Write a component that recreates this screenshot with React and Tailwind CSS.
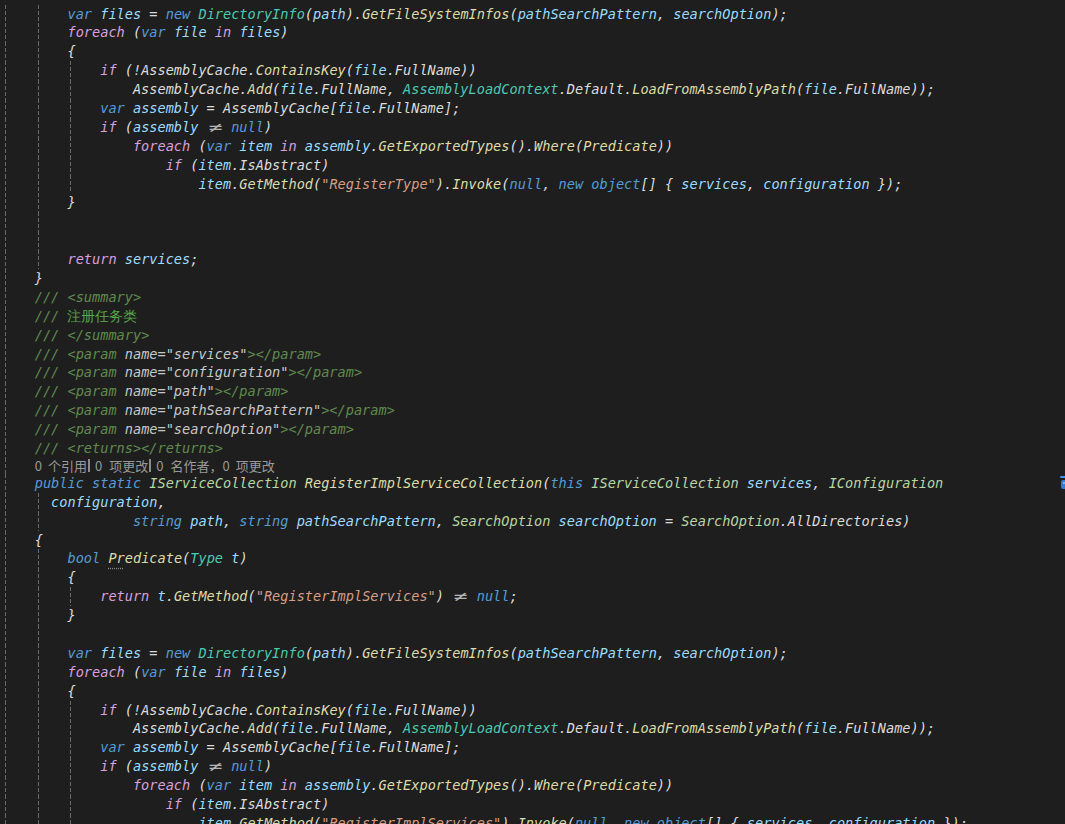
import React from 'react';

const C = {
  k: 'text-[#569cd6]',
  c: 'text-[#d8a0df]',
  t: 'text-[#4ec9b0]',
  i: 'text-[#b8d7a3]',
  f: 'text-[#dcdcaa]',
  v: 'text-[#9cdcfe]',
  s: 'text-[#d69d85]',
  g: 'text-[#57a64a] not-italic',
  d: 'text-[#608b4e]',
  a: 'text-[#c8c8c8]',
  p: 'text-[#dcdcdc]',
};

function Tokens({ text }) {
  const segs = text.split('|');
  return segs.map((seg, i) => {
    if (seg.length >= 2 && seg[1] === ':') {
      const key = seg[0];
      const body = seg.slice(2);
      if (key === 'n') {
        return (
          <span key={i} className="inline-block w-[2ch] text-center not-italic text-[#b4b4b4] scale-x-[1.7]">
            {body}
          </span>
        );
      }
      if (key === 'u') {
        return (
          <span
            key={i}
            className="text-[#dcdcaa] underline decoration-dotted decoration-[#8a8a8a] underline-offset-[4px]"
          >
            {body}
          </span>
        );
      }
      if (C[key]) {
        return (
          <span key={i} className={C[key]}>
            {body}
          </span>
        );
      }
    }
    return (
      <span key={i} className="text-[#dcdcdc]">
        {seg}
      </span>
    );
  });
}

function Guide() {
  return (
    <div className="ml-[3px] w-px h-full bg-[linear-gradient(to_bottom,#6a6a6a_0,#6a6a6a_4px,transparent_4px,transparent_6px)] bg-[length:1px_6px]" />
  );
}

function Line({ ind, g, text, extra }) {
  const cells = [];
  let rem = ind;
  let idx = 0;
  while (rem > 0) {
    const w = Math.min(4, rem);
    cells.push({ w, guide: idx < g });
    rem -= w;
    idx++;
  }
  return (
    <div className="flex h-[18.9px] leading-[18.9px] whitespace-pre">
      {cells.map((c, i) => (
        <div key={i} className={c.w === 4 ? 'w-[4ch] shrink-0 flex' : 'w-[2ch] shrink-0 flex'}>
          {c.guide && <Guide />}
        </div>
      ))}
      {text && (
        <span>
          <Tokens text={text} />
        </span>
      )}
      {extra}
    </div>
  );
}

function Bar() {
  return <span className="ml-[1px] w-[2px] h-[13px] bg-[#8c8c8c]" />;
}

function CodeLens() {
  return (
    <div className="flex h-[16px] whitespace-pre">
      <div className="w-[4ch] shrink-0 flex">
        <Guide />
      </div>
      <div className="flex items-center not-italic text-[13px] leading-[16px] text-[#999999] font-['Noto_Sans_CJK_SC','Noto_Sans',sans-serif]">
        <span>0</span>
        <span className="ml-[6px]">个引用</span>
        <Bar />
        <span className="ml-[5px]">0</span>
        <span className="ml-[7px]">项更改</span>
        <Bar />
        <span className="ml-[5px]">0</span>
        <span className="ml-[7px]">名作者，</span>
        <span>0</span>
        <span className="ml-[6px]">项更改</span>
      </div>
    </div>
  );
}

function HintIcon() {
  return (
    <div className="ml-auto -mr-[9px] shrink-0 flex items-center h-full">
      <svg width="16" height="16" viewBox="0 0 16 16">
        <rect x="2" y="1" width="12" height="2" rx="1" fill="#3794ff" />
        <rect x="3" y="5" width="10" height="9" rx="2" fill="#2b7fd9" />
        <rect x="5" y="7" width="6" height="2" fill="#6fb6ff" />
      </svg>
    </div>
  );
}

const loop = (str) => [
  { ind: 8, g: 2, text: 'k:var| |v:files| = |k:new| |t:DirectoryInfo|(|v:path|).|f:GetFileSystemInfos|(|v:pathSearchPattern|, |v:searchOption|);' },
  { ind: 8, g: 2, text: 'c:foreach| (|k:var| |v:file| |c:in| |v:files|)' },
  { ind: 8, g: 2, text: '{' },
  { ind: 12, g: 3, text: 'c:if| (!AssemblyCache.|f:ContainsKey|(|v:file|.FullName))' },
  { ind: 16, g: 3, text: 'AssemblyCache.|f:Add|(|v:file|.FullName, |t:AssemblyLoadContext|.Default.|f:LoadFromAssemblyPath|(|v:file|.FullName));' },
  { ind: 12, g: 3, text: 'k:var| |v:assembly| = AssemblyCache[|v:file|.FullName];' },
  { ind: 12, g: 3, text: 'c:if| (|v:assembly| |n:≠| |k:null|)' },
  { ind: 16, g: 3, text: 'c:foreach| (|k:var| |v:item| |c:in| |v:assembly|.|f:GetExportedTypes|().|f:Where|(|f:Predicate|))' },
  { ind: 20, g: 3, text: 'c:if| (|v:item|.IsAbstract)' },
  { ind: 24, g: 3, text: 'v:item|.|f:GetMethod|(|s:"' + str + '"|).|f:Invoke|(|k:null|, |k:new| |k:object|[] { |v:services|, |v:configuration| });' },
];

const param = (n) => ({ ind: 4, g: 1, text: 'd:/// <param |a:name="' + n + '"|d:></param>' });

const top = [
  ...loop('RegisterType'),
  { ind: 8, g: 2, text: '}' },
  { ind: 8, g: 2, text: '' },
  { ind: 8, g: 2, text: '' },
  { ind: 8, g: 2, text: 'c:return| |v:services|;' },
  { ind: 4, g: 1, text: '}' },
  { ind: 4, g: 1, text: 'd:/// <summary>' },
  { ind: 4, g: 1, text: 'd:/// |g:注册任务类' },
  { ind: 4, g: 1, text: 'd:/// </summary>' },
  param('services'),
  param('configuration'),
  param('path'),
  param('pathSearchPattern'),
  param('searchOption'),
  { ind: 4, g: 1, text: 'd:/// <returns></returns>' },
];

const bottom = [
  { ind: 6, g: 2, text: 'v:configuration|,' },
  { ind: 16, g: 2, text: 'k:string| |v:path|, |k:string| |v:pathSearchPattern|, |i:SearchOption| |v:searchOption| = |i:SearchOption|.AllDirectories)' },
  { ind: 4, g: 1, text: '{' },
  { ind: 8, g: 2, text: 'k:bool| |u:Pr|f:edicate|(|t:Type| |v:t|)' },
  { ind: 8, g: 2, text: '{' },
  { ind: 12, g: 3, text: 'c:return| |v:t|.|f:GetMethod|(|s:"RegisterImplServices"|) |n:≠| |k:null|;' },
  { ind: 8, g: 2, text: '}' },
  { ind: 8, g: 2, text: '' },
  ...loop('RegisterImplServices'),
];

export default function App() {
  return (
    <div className="w-[1065px] h-[824px] overflow-hidden bg-[#1e1e1e] pt-[4.5px] pl-[2px] italic text-[13.6px] text-[#dcdcdc] font-['DejaVu_Sans_Mono','Liberation_Mono',monospace]">
      {top.map((l, i) => (
        <Line key={'t' + i} {...l} />
      ))}
      <CodeLens />
      <Line
        ind={4}
        g={1}
        text="k:public| |k:static| |i:IServiceCollection| |f:RegisterImplServiceCollection|(|k:this| |i:IServiceCollection| |v:services|, |i:IConfiguration|"
        extra={<HintIcon />}
      />
      {bottom.map((l, i) => (
        <Line key={'b' + i} {...l} />
      ))}
    </div>
  );
}
